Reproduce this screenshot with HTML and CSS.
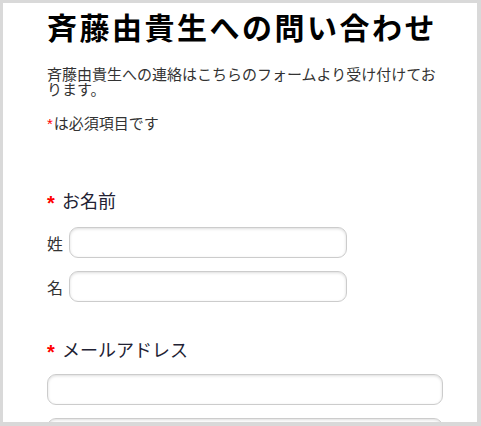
FILE: index.html
```html
<!DOCTYPE html>
<html lang="ja">
<head>
<meta charset="utf-8">
<title>斉藤由貴生への問い合わせ</title>
<link rel="stylesheet" href="styles.css">
</head>
<body>
<div class="frame">
  <main class="content">
    <h1 class="title">斉藤由貴生への問い合わせ</h1>
    <p class="desc">斉藤由貴生への連絡はこちらのフォームより受け付けております。</p>
    <p class="note"><span class="req-small">*</span>は必須項目です</p>

    <form class="form">
      <section class="group group-name">
        <div class="group-label"><span class="req">*</span>お名前</div>
        <div class="rows">
          <label class="row"><span class="row-label">姓</span><input class="field field-short" type="text"></label>
          <label class="row"><span class="row-label">名</span><input class="field field-short" type="text"></label>
        </div>
      </section>

      <section class="group group-mail">
        <div class="group-label"><span class="req">*</span>メールアドレス</div>
        <div class="rows rows-mail">
          <input class="field field-wide" type="email">
          <input class="field field-wide" type="email">
        </div>
      </section>
    </form>
  </main>
</div>
</body>
</html>
```

FILE: styles.css
```css
html, body {
  margin: 0;
  padding: 0;
  height: 100%;
  overflow: hidden;
}
html {
  background: #d9d9d9;
}
body {
  box-sizing: border-box;
  padding: 3px 4px 4px 3px;
}
.frame {
  background: #ffffff;
  height: 100%;
  overflow: hidden;
}
.content {
  padding: 5px 0 0 44px;
  width: 396px;
  font-family: "Noto Sans CJK JP", "Noto Sans", sans-serif;
  color: #333333;
}
.title {
  margin: 0;
  font-size: 30px;
  line-height: 36px;
  font-weight: bold;
  color: #000000;
  letter-spacing: 2.5px;
  white-space: nowrap;
}
.desc {
  margin: 22px 0 0;
  font-size: 15px;
  line-height: 15px;
  width: 392px;
}
.note {
  margin: 19px 0 0;
  font-size: 15px;
  line-height: 15px;
}
.req-small {
  color: #ff0000;
  font-family: "Liberation Sans", sans-serif;
  font-size: 15px;
  margin-right: 1px;
}
.form {
  display: flex;
  flex-direction: column;
}
.group-name {
  margin-top: 57px;
}
.group-mail {
  margin-top: 35px;
}
.group-label {
  font-size: 18px;
  line-height: 24px;
  color: #222233;
  display: flex;
  align-items: center;
}
.req {
  color: #ff0000;
  font-family: "Liberation Sans", sans-serif;
  font-weight: bold;
  font-size: 20px;
  width: 15px;
  position: relative;
  top: 3px;
}
.rows {
  display: flex;
  flex-direction: column;
  gap: 13px;
  margin-top: 15px;
}
.rows-mail {
  margin-top: 13px;
}
.row {
  display: flex;
  align-items: center;
  gap: 6px;
}
.row-label {
  font-size: 16px;
  width: 16px;
  color: #333333;
}
.field {
  box-sizing: border-box;
  height: 31px;
  margin: 0;
  border: 1px solid #cccccc;
  border-radius: 9px;
  background: #ffffff;
  box-shadow: inset 0 1px 3px rgba(0, 0, 0, 0.14);
  outline: none;
  padding: 0 8px;
  font-size: 15px;
}
.field-short {
  width: 278px;
}
.field-wide {
  width: 396px;
}
```
